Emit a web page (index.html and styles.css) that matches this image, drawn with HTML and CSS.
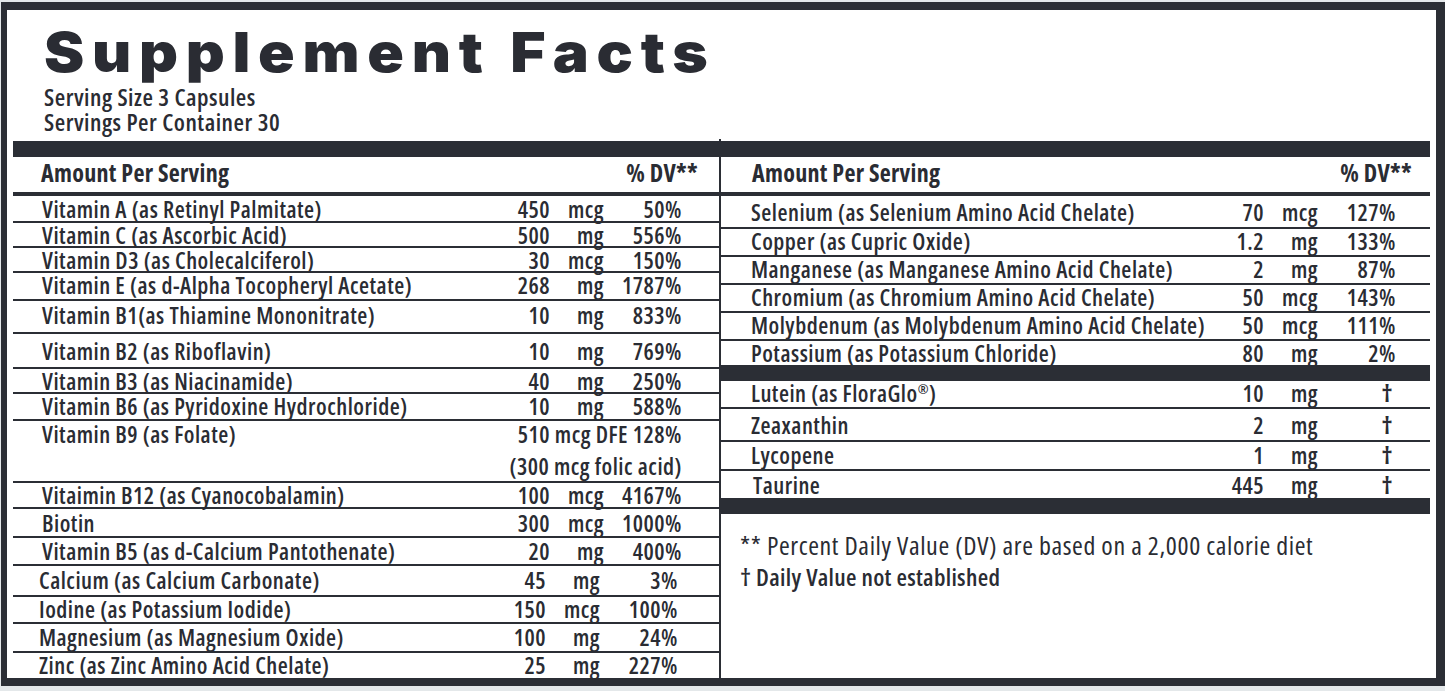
FILE: index.html
```html
<!DOCTYPE html>
<html lang="en">
<head>
<meta charset="utf-8">
<title>Supplement Facts</title>
<link rel="stylesheet" href="styles.css">
</head>
<body>
<div class="frame">
  <div class="panel">
    <h1 class="title">Supplement Facts</h1>
    <div class="serving">
      <div>Serving Size 3 Capsules</div>
      <div>Servings Per Container 30</div>
    </div>
    <div class="columns">
      <section class="col col-left">
        <div class="bar"></div>
        <div class="head"><span>Amount Per Serving</span><span>% DV**</span></div>
        <div class="row t27 p2"><span class="name">Vitamin A (as Retinyl Palmitate)</span><span class="amt">450</span><span class="unit">mcg</span><span class="dv">50%</span></div>
        <div class="row t25"><span class="name">Vitamin C (as Ascorbic Acid)</span><span class="amt">500</span><span class="unit">mg</span><span class="dv">556%</span></div>
        <div class="row t25"><span class="name">Vitamin D3 (as Cholecalciferol)</span><span class="amt">30</span><span class="unit">mcg</span><span class="dv">150%</span></div>
        <div class="row t28"><span class="name">Vitamin E (as d-Alpha Tocopheryl Acetate)</span><span class="amt">268</span><span class="unit">mg</span><span class="dv">1787%</span></div>
        <div class="row t33 p3"><span class="name">Vitamin B1(as Thiamine Mononitrate)</span><span class="amt">10</span><span class="unit">mg</span><span class="dv">833%</span></div>
        <div class="row t35 p6"><span class="name">Vitamin B2 (as Riboflavin)</span><span class="amt">10</span><span class="unit">mg</span><span class="dv">769%</span></div>
        <div class="row t25"><span class="name">Vitamin B3 (as Niacinamide)</span><span class="amt">40</span><span class="unit">mg</span><span class="dv">250%</span></div>
        <div class="row t27"><span class="name">Vitamin B6 (as Pyridoxine Hydrochloride)</span><span class="amt">10</span><span class="unit">mg</span><span class="dv">588%</span></div>
        <div class="row t62 p2"><span class="name">Vitamin B9 (as Folate)</span><span class="span-vals">510 mcg DFE 128%<br>(300 mcg folic acid)</span></div>
        <div class="row t26"><span class="name">Vitaimin B12 (as Cyanocobalamin)</span><span class="amt">100</span><span class="unit">mcg</span><span class="dv">4167%</span></div>
        <div class="row t29 p3"><span class="name">Biotin</span><span class="amt">300</span><span class="unit">mcg</span><span class="dv">1000%</span></div>
        <div class="row t28 p2"><span class="name">Vitamin B5 (as d-Calcium Pantothenate)</span><span class="amt">20</span><span class="unit">mg</span><span class="dv">400%</span></div>
        <div class="row t31 p3 shift"><span class="name">Calcium (as Calcium Carbonate)</span><span class="amt">45</span><span class="unit">mg</span><span class="dv">3%</span></div>
        <div class="row t27 shift"><span class="name">Iodine (as Potassium Iodide)</span><span class="amt">150</span><span class="unit">mcg</span><span class="dv">100%</span></div>
        <div class="row t29 p2 shift"><span class="name">Magnesium (as Magnesium Oxide)</span><span class="amt">100</span><span class="unit">mg</span><span class="dv">24%</span></div>
        <div class="row t25 noline shift"><span class="name">Zinc (as Zinc Amino Acid Chelate)</span><span class="amt">25</span><span class="unit">mg</span><span class="dv">227%</span></div>
      </section>
      <section class="col col-right">
        <div class="bar"></div>
        <div class="head"><span>Amount Per Serving</span><span>% DV**</span></div>
        <div class="row t33 p5"><span class="name">Selenium (as Selenium Amino Acid Chelate)</span><span class="amt">70</span><span class="unit">mcg</span><span class="dv">127%</span></div>
        <div class="row t28"><span class="name">Copper (as Cupric Oxide)</span><span class="amt">1.2</span><span class="unit">mg</span><span class="dv">133%</span></div>
        <div class="row t28"><span class="name">Manganese (as Manganese Amino Acid Chelate)</span><span class="amt">2</span><span class="unit">mg</span><span class="dv">87%</span></div>
        <div class="row t28"><span class="name">Chromium (as Chromium Amino Acid Chelate)</span><span class="amt">50</span><span class="unit">mcg</span><span class="dv">143%</span></div>
        <div class="row t28"><span class="name">Molybdenum (as Molybdenum Amino Acid Chelate)</span><span class="amt">50</span><span class="unit">mcg</span><span class="dv">111%</span></div>
        <div class="row t24 noline"><span class="name">Potassium (as Potassium Chloride)</span><span class="amt">80</span><span class="unit">mg</span><span class="dv">2%</span></div>
        <div class="bar"></div>
        <div class="row t28"><span class="name">Lutein (as FloraGlo<sup>®</sup>)</span><span class="amt">10</span><span class="unit">mg</span><span class="dv dag">†</span></div>
        <div class="row t33 p5"><span class="name">Zeaxanthin</span><span class="amt">2</span><span class="unit">mg</span><span class="dv dag">†</span></div>
        <div class="row t29 p2"><span class="name">Lycopene</span><span class="amt">1</span><span class="unit">mg</span><span class="dv dag">†</span></div>
        <div class="row t27 p3 noline"><span class="name name-in">Taurine</span><span class="amt">445</span><span class="unit">mg</span><span class="dv dag">†</span></div>
        <div class="bar"></div>
        <div class="notes">
          <p class="note">** Percent Daily Value (DV) are based on a 2,000 calorie diet</p>
          <p class="note note-bold">† Daily Value not established</p>
        </div>
      </section>
    </div>
  </div>
</div>
</body>
</html>
```
FILE: styles.css
```css
html, body {
  margin: 0;
  padding: 0;
}
body {
  background: #e4e8ea;
  width: 1445px;
  height: 691px;
  overflow: hidden;
  color: #2a2c33;
  font-family: "Open Sans", "DejaVu Sans", sans-serif;
  font-stretch: 85%;
}
.frame {
  margin: 2px 0 0 1px;
  width: 1444px;
  height: 684px;
  box-sizing: border-box;
  background: #2b2e35;
  padding: 8px 9px 8px 6px;
}
.panel {
  background: #fff;
  height: 668px;
  box-sizing: border-box;
  padding: 0 6px;
  display: flex;
  flex-direction: column;
}
.title {
  align-self: flex-start;
  margin: 15px 0 0 31px;
  font-family: "Inter", "DejaVu Sans", sans-serif;
  font-stretch: normal;
  font-weight: 900;
  font-size: 55px;
  line-height: 55px;
  letter-spacing: 7px;
  color: #2a2c33;
  transform: scaleX(1.1);
  transform-origin: 0 0;
  white-space: nowrap;
}
.serving {
  margin: 4px 0 0 31px;
  font-size: 24px;
  line-height: 25px;
  font-weight: 600;
  letter-spacing: 0.5px;
}
.columns {
  margin-top: 5px;
  flex: 1;
  display: flex;
  min-height: 0;
}
.col {
  padding-top: 2px;
  display: flex;
  flex-direction: column;
  min-width: 0;
}
.col-left {
  flex: none;
  width: 706px;
}
.col-right {
  flex: 1 1 0;
  border-left: 2px solid #2b2e35;
}
.bar {
  height: 16px;
  background: #2b2e35;
  flex: none;
}
.head {
  height: 31px;
  padding-top: 4px;
  border-bottom: 4px solid #2b2e35;
  display: flex;
  justify-content: space-between;
  font-size: 24px;
  line-height: 24px;
  font-weight: 700;
  letter-spacing: 0.3px;
}
.col-left .head {
  padding-left: 28px;
  padding-right: 21px;
}
.col-right .head {
  padding-left: 31px;
  padding-right: 18px;
}
.row {
  display: grid;
  grid-template-columns: minmax(0, 1fr) 60px 54px 78px;
  box-sizing: border-box;
  padding-top: 1px;
  border-bottom: 2px solid #2b2e35;
  font-size: 23px;
  line-height: 22px;
  font-weight: 600;
  letter-spacing: 0.5px;
  white-space: nowrap;
  flex: none;
}
.col-left .row {
  padding-left: 29px;
  padding-right: 37px;
}
.col-right .row {
  padding-left: 30px;
  padding-right: 34px;
}
.col-left .row.shift {
  padding-left: 26px;
  padding-right: 41px;
}
.row.noline {
  border-bottom: none;
}
.amt, .unit, .dv {
  text-align: right;
}
.dag {
  padding-right: 3px;
  font-weight: 700;
}
.name-in {
  padding-left: 2px;
}
.span-vals {
  grid-column: 2 / 5;
  text-align: right;
  line-height: 32px;
  margin-top: -5px;
}
.row sup {
  font-size: 13px;
  line-height: 0;
  vertical-align: 8px;
}
.t24 { height: 24px; }
.t25 { height: 25px; }
.t26 { height: 26px; }
.t27 { height: 27px; }
.t28 { height: 28px; }
.t29 { height: 29px; }
.t31 { height: 31px; }
.t33 { height: 33px; }
.t35 { height: 35px; }
.t62 { height: 62px; }
.p2 { padding-top: 2px; }
.p3 { padding-top: 3px; }
.p5 { padding-top: 5px; }
.p6 { padding-top: 6px; }
.notes {
  padding: 16px 0 0 19px;
}
.note {
  margin: 0;
  font-size: 26px;
  line-height: 31px;
  font-weight: 400;
  letter-spacing: 0.6px;
}
.note-bold {
  font-size: 24px;
  font-weight: 600;
  letter-spacing: 0.3px;
}
```
